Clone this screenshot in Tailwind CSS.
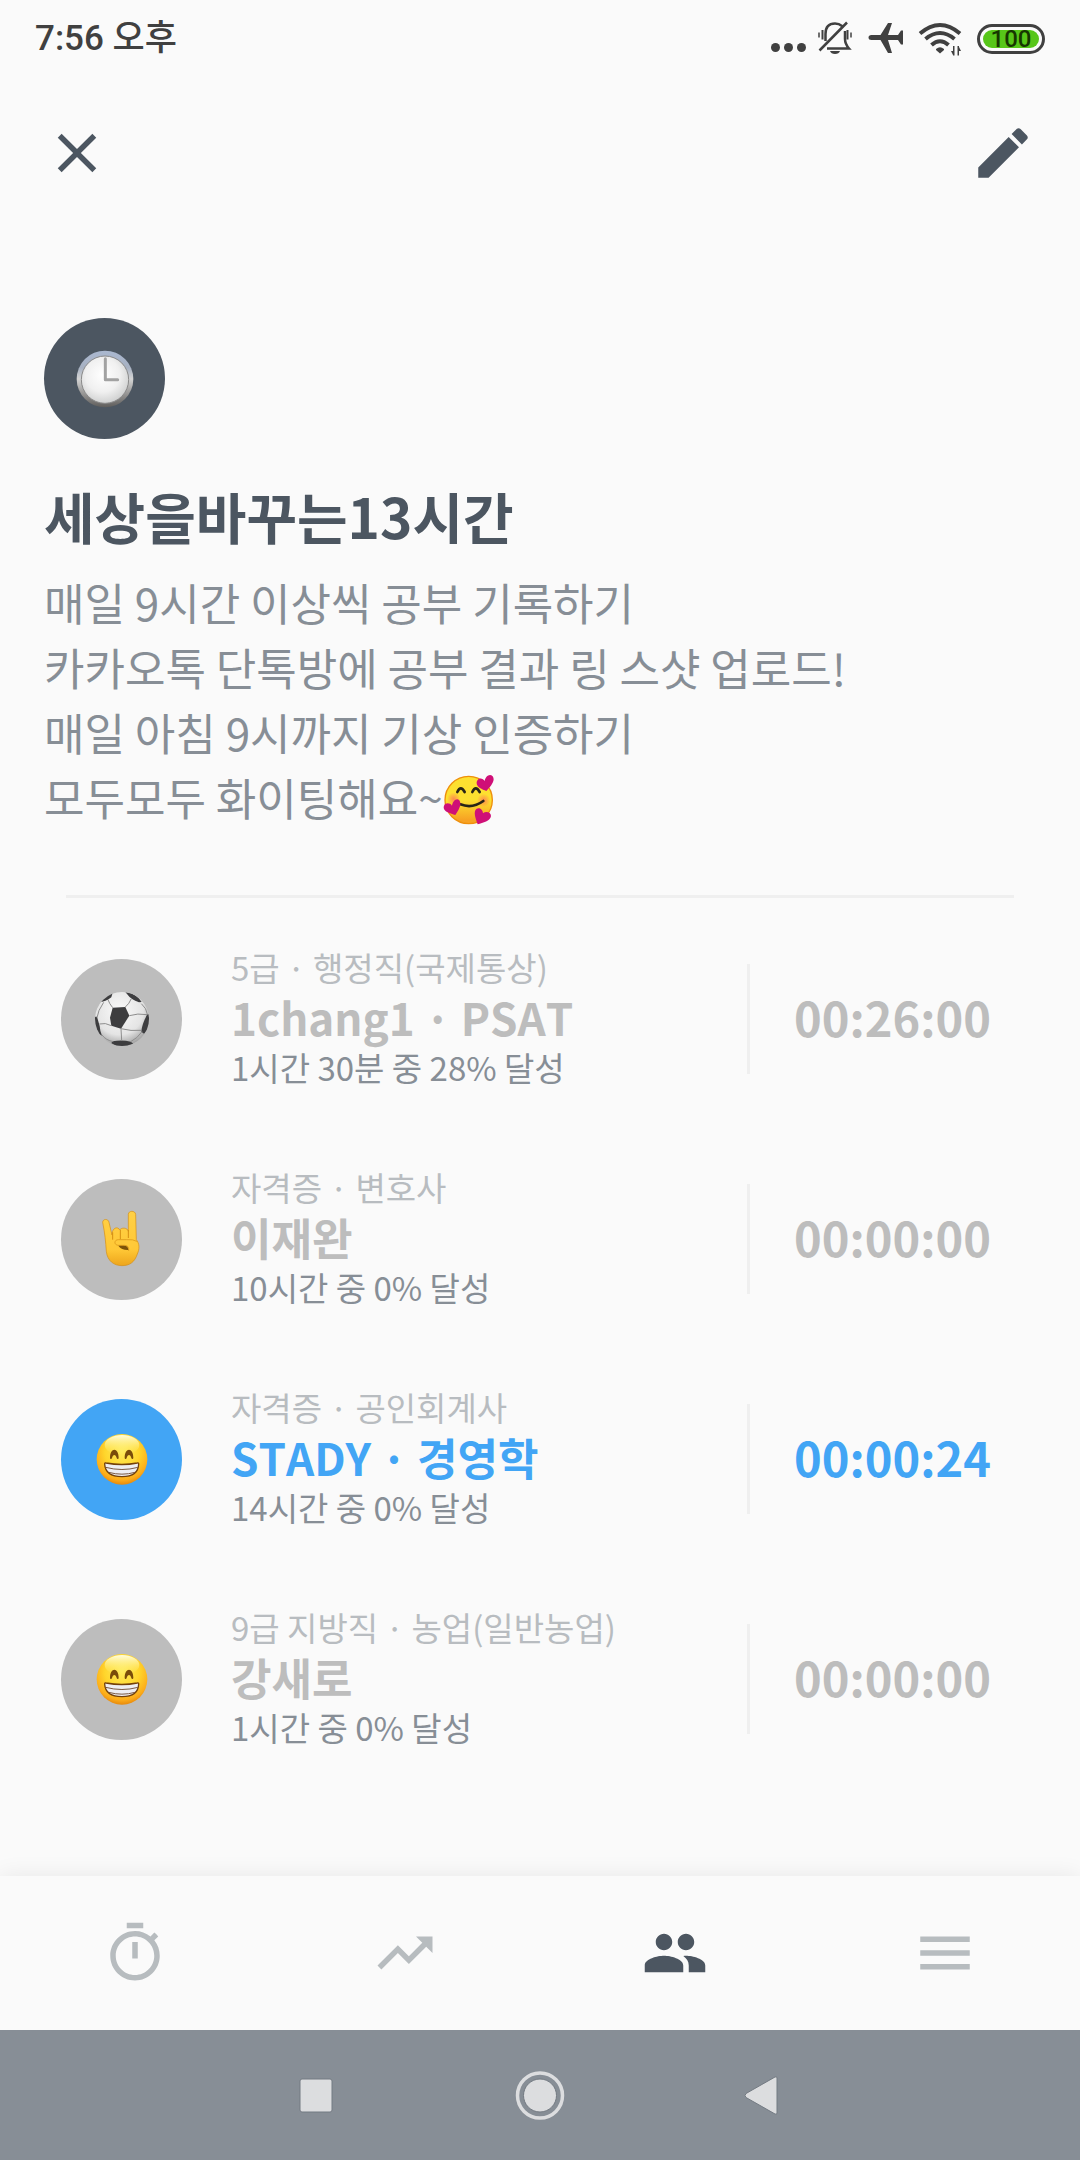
<!DOCTYPE html>
<html lang="ko">
<head>
<meta charset="utf-8">
<meta name="viewport" content="width=device-width, initial-scale=1">
<title>세상을바꾸는13시간</title>
<script src="https://cdn.jsdelivr.net/npm/@tailwindcss/browser@4"></script>
</head>
<body class="flex min-h-screen flex-col bg-[#fafafa] font-['Noto_Sans_CJK_JP','Noto_Sans_CJK_KR',sans-serif] text-[#4c5661] [font-feature-settings:'locl'_0] [font-kerning:none]">

<svg class="absolute size-0" aria-hidden="true">
  <defs>
    <radialGradient id="skin" cx="0.5" cy="0.35" r="0.68">
      <stop offset="0" stop-color="#ffec5c"/><stop offset="0.5" stop-color="#ffd62c"/><stop offset="0.82" stop-color="#fcac1a"/><stop offset="1" stop-color="#e07f08"/>
    </radialGradient>
    <linearGradient id="shine" x1="0" y1="0" x2="0" y2="1">
      <stop offset="0" stop-color="#fffde0"/><stop offset="1" stop-color="#fff06a" stop-opacity="0"/>
    </linearGradient>
    <linearGradient id="rim" x1="0" y1="0" x2="0" y2="1">
      <stop offset="0" stop-color="#aab8d0"/><stop offset="0.3" stop-color="#a7b1c2"/><stop offset="0.5" stop-color="#d4d4d4"/><stop offset="1" stop-color="#5e5c5a"/>
    </linearGradient>
    <radialGradient id="dial" cx="0.45" cy="0.4" r="0.6">
      <stop offset="0" stop-color="#ffffff"/><stop offset="0.6" stop-color="#f0f0f0"/><stop offset="1" stop-color="#d0d1d1"/>
    </radialGradient>
    <radialGradient id="leather" cx="0.45" cy="0.35" r="0.68">
      <stop offset="0" stop-color="#fafafa"/><stop offset="0.65" stop-color="#e4e4e4"/><stop offset="1" stop-color="#9a9a9a"/>
    </radialGradient>
    <linearGradient id="hand" x1="0" y1="0" x2="0" y2="1">
      <stop offset="0" stop-color="#ffd045"/><stop offset="0.7" stop-color="#ffc836"/><stop offset="1" stop-color="#eda51c"/>
    </linearGradient>
    <linearGradient id="love" x1="0" y1="0" x2="0" y2="1">
      <stop offset="0.5" stop-color="#fde030"/><stop offset="0.92" stop-color="#f7a223"/>
    </linearGradient>
    <radialGradient id="blush">
      <stop offset="0" stop-color="#ff7555" stop-opacity="0.8"/><stop offset="1" stop-color="#ff7555" stop-opacity="0"/>
    </radialGradient>
    <clipPath id="ball-edge"><circle cx="108" cy="102" r="81"/></clipPath>

    <symbol id="grin" viewBox="2 0 216 204">
      <circle cx="110" cy="103" r="76" fill="url(#skin)"/>
      <ellipse cx="110" cy="60" rx="52" ry="30" fill="url(#shine)"/>
      <g fill="#7a4d0a">
        <path d="M74 98c0-32 26-32 26 0 0 5-5 5-6 1-3-12-11-12-14 0-1 4-6 4-6-1z"/><path d="M118 98c0-32 26-32 26 0 0 5-5 5-6 1-3-12-11-12-14 0-1 4-6 4-6-1z"/>
      </g>
      <path d="M58 117q0-4 4-3 48 9 94 0 4-1 4 3-1 38-50 38-50 0-52-38z" fill="#eeeef2" stroke="#73400a" stroke-width="4"/>
      <path d="M61 127q49 13 97 0M70 142q40 11 79 0" fill="none" stroke="#7b5a44" stroke-width="3"/>
    </symbol>

    <symbol id="soccer" viewBox="0 0 216 204">
      <circle cx="108" cy="102" r="81" fill="url(#leather)"/>
      <g clip-path="url(#ball-edge)">
        <g fill="#3d3d3f">
          <path d="M80 68 118 66 130 92 105 131 76 122 72 98z"/>
          <path d="M38 48q16-20 42-25l-4 14q-16 13-38 15z"/>
          <path d="M118 21q34 4 49 30l-8 1q-24-8-36-25z"/>
          <path d="M184 88l8 0 0 40-18 18-8-6q2-24 18-52z"/>
          <path d="M25 95h8l8 28q1 16 7 29l-14-8-10-30z"/>
          <path d="M80 169q28-5 54 1l8 6-20 10H94l-18-12z"/>
        </g>
        <g fill="none" stroke="#8d8d8d" stroke-width="3">
          <path d="M80 68Q70 56 66 44M118 66q12-10 18-25M130 92q24-8 54-3M105 131l2 36M76 122q-18-10-36-5M105 131q30 8 60 5M33 98q2-20 20-46M166 56q16 14 18 32M48 150q12 16 34 20M134 170q20-10 34-30"/>
        </g>
      </g>
    </symbol>

    <symbol id="rock" viewBox="107 136 216 204">
      <path d="M157 188c0-11 17-12 19 0l9 38c0-24 19-26 23-15 4-8 24-8 26 4v-51c0-12 21-12 22 0l2 76c10 12 10 28 3 43-8 24-22 35-46 35s-44-14-47-43c-2-28-4-52-11-87z" fill="url(#hand)" stroke="#d58e12" stroke-width="2"/>
      <path d="M187 218v22M210 211v28M234 211v24" fill="none" stroke="#d58e12" stroke-width="3"/>
      <path d="M262 246q-14-8-34-6h-24c-13 0-14 16 0 17h19q14 0 12 17" fill="#ffca3a" stroke="#d58e12" stroke-width="2"/>
      <path d="M204 258q10 14 30 13 0-13-13-13z" fill="#7d5208"/>
    </symbol>

    <symbol id="clock" viewBox="115 133 216 204">
      <circle cx="223" cy="235" r="85" fill="url(#rim)"/>
      <circle cx="223" cy="237" r="71" fill="url(#dial)" stroke="#8a8a8a" stroke-width="3"/>
      <path d="M224 174v63h37" fill="none" stroke="#a2a2a2" stroke-width="9" stroke-linecap="round" stroke-linejoin="round"/>
    </symbol>

    <symbol id="smile-hearts" viewBox="30 45 156 156">
      <circle cx="107" cy="123" r="71" fill="url(#love)" stroke="#ee8f0b" stroke-width="4"/>
      <circle cx="62" cy="120" r="20" fill="url(#blush)"/><circle cx="152" cy="124" r="20" fill="url(#blush)"/>
      <g fill="none" stroke="#292517" stroke-width="8" stroke-linecap="round">
        <path d="M73 99q10-22 22 0M118 99q10-22 22 0M82 136q36 14 69-10"/>
      </g>
      <g fill="#cf0f77">
        <path d="M160 96c-14-6-34-13-28-30 5-11 18-9 23 0 2-12 14-24 24-14 10 14-8 32-19 44z"/>
        <path d="M67 168c-16-6-40-10-34-28 5-10 18-9 24 0 2-14 14-25 22-16 9 13-3 30-12 44z"/>
        <path d="M134 196c-6-16-14-38-4-46 11-7 20 4 20 13 8-7 24-4 24 8-2 16-24 20-40 25z"/>
      </g>
    </symbol>
  </defs>
</svg>

<div class="flex h-[78px] items-center justify-between pr-[35px] pl-[35px] text-[#404040]">
  <span class="font-['Roboto','Noto_Sans_CJK_KR',sans-serif] text-[35px] leading-[78px] font-medium">7:56 오후</span>
  <div class="flex items-center">
    <svg class="h-[38px] w-[209px]" viewBox="768 20 209 38" fill="currentColor" role="img" aria-label="알림, 무음, 비행기 모드, Wi-Fi">
      <circle cx="775.5" cy="47.500" r="4.500"/><circle cx="788.500" cy="47.500" r="4.500"/><circle cx="801.500" cy="47.500" r="4.500"/>
      <g fill="none" stroke="currentColor" stroke-width="2.500">
        <path d="M825.500 41V34q0-10.500 9.500-10.500 4 0 7 2.500M845 31v8q0 5 4 9.500H827M819.500 50.500l27.500-28"/>
        <path d="M822.500 30v9.500M847.500 30v9.500" stroke-width="2"/><path d="M819 32.500v5M851 32.500v5" stroke-width="1.500"/>
      </g>
      <path d="M830 51h10q-1 3-5 3t-5-3z"/>
      <path d="M868.500 37.500q0-2.500 3-2.500h9l7.500-12h4l-4 12h10l3-4.500h2v14h-2l-3-4.500h-10l4 13h-4l-7.500-13h-9q-3 0-3-2.500z"/>
      <g fill="none" stroke="currentColor" stroke-width="4">
        <path d="M920 33.500Q940 16.500 960 33.500M925.500 39Q940 27 954.500 39M931.500 45Q940 37.500 948.500 45"/>
      </g>
      <path d="M936 49q4-3.500 8 0v1l-4 3.500-4-3.500z"/>
      <path d="M953 46v9.500h1.500V46zM951 51h2v4zM957.500 46v9.500h1.500V46zM959 47l2 4h-2z"/>
    </svg>
    <div class="flex h-[30px] w-[68px] rounded-full border-3 border-[#404040] p-[3px]">
      <span class="flex w-full items-center justify-center rounded-full bg-[#57c619] font-['Roboto',sans-serif] text-[24px] leading-none font-medium text-[#163600]">100</span>
    </div>
  </div>
</div>

<header class="flex h-[150px] items-center justify-between px-[44px]">
  <button type="button" aria-label="닫기"><svg class="size-[66px]" viewBox="0 0 24 24" fill="currentColor"><path d="M19 6.410 17.590 5 12 10.590 6.410 5 5 6.410 10.590 12 5 17.590 6.410 19 12 13.410 17.590 19 19 17.590 13.410 12z"/></svg></button>
  <button type="button" aria-label="편집"><svg class="size-[66px]" viewBox="0 0 24 24" fill="currentColor"><path d="M3 17.250V21h3.750L17.810 9.940l-3.750-3.750L3 17.250zM20.710 7.040c.39-.39.39-1.020 0-1.410l-2.340-2.340c-.39-.39-1.020-.39-1.410 0l-1.830 1.830 3.750 3.750 1.830-1.830z"/></svg></button>
</header>

<main class="flex-1">
  <section class="px-[44px] pt-[90px]">
    <div class="flex size-[121px] items-center justify-center rounded-full bg-[#4c5661]">
      <svg class="h-[68px] w-[72px]" role="img" aria-label="시계"><use href="#clock"/></svg>
    </div>
    <h1 class="mt-[36px] text-[55px] leading-[80px] font-bold">세상을바꾸는13시간</h1>
    <p class="mt-[15px] text-[44px] leading-[65px] text-[#878e96]">매일 9시간 이상씩 공부 기록하기<br>카카오톡 단톡방에 공부 결과 링 스샷 업로드!<br>매일 아침 9시까지 기상 인증하기<br>모두모두 화이팅해요~<svg class="mb-[8px] inline-block size-[52px] align-middle" role="img" aria-label="하트 웃는 얼굴"><use href="#smile-hearts"/></svg></p>
  </section>

  <hr class="mx-[66px] mt-[61px] border-t-3 border-[#efefef]">

  <ul class="mt-[11px]">
    <li class="flex h-[220px] items-center pl-[61px]">
      <div class="flex size-[121px] shrink-0 items-center justify-center rounded-full bg-[#bdbdbd]"><svg class="h-[68px] w-[72px]" role="img" aria-label="축구공"><use href="#soccer"/></svg></div>
      <div class="ml-[49px] flex-1 pb-[4px] text-[33px] leading-[50px] text-[#878e96]">
        <p class="text-[#b8bcc0]">5급 · 행정직(국제통상)</p>
        <h2 class="text-[44px] leading-[50px] font-bold text-[#bdbdbd]">1chang1 · PSAT</h2>
        <p>1시간 30분 중 28% 달성</p>
      </div>
      <div class="flex h-[110px] w-[333px] items-center border-l-3 border-[#efefef] pb-[4px] pl-[44px] text-[47px] font-bold text-[#bdbdbd]"><time>00:26:00</time></div>
    </li>
    <li class="flex h-[220px] items-center pl-[61px]">
      <div class="flex size-[121px] shrink-0 items-center justify-center rounded-full bg-[#bdbdbd]"><svg class="h-[68px] w-[72px]" role="img" aria-label="손"><use href="#rock"/></svg></div>
      <div class="ml-[49px] flex-1 pb-[4px] text-[33px] leading-[50px] text-[#878e96]">
        <p class="text-[#b8bcc0]">자격증 · 변호사</p>
        <h2 class="text-[44px] leading-[50px] font-bold text-[#bdbdbd]">이재완</h2>
        <p>10시간 중 0% 달성</p>
      </div>
      <div class="flex h-[110px] w-[333px] items-center border-l-3 border-[#efefef] pb-[4px] pl-[44px] text-[47px] font-bold text-[#bdbdbd]"><time>00:00:00</time></div>
    </li>
    <li class="flex h-[220px] items-center pl-[61px]">
      <div class="flex size-[121px] shrink-0 items-center justify-center rounded-full bg-[#42a5f5]"><svg class="h-[68px] w-[72px]" role="img" aria-label="웃는 얼굴"><use href="#grin"/></svg></div>
      <div class="ml-[49px] flex-1 pb-[4px] text-[33px] leading-[50px] text-[#878e96]">
        <p class="text-[#b8bcc0]">자격증 · 공인회계사</p>
        <h2 class="text-[44px] leading-[50px] font-bold text-[#42a5f5]">STADY · 경영학</h2>
        <p>14시간 중 0% 달성</p>
      </div>
      <div class="flex h-[110px] w-[333px] items-center border-l-3 border-[#efefef] pb-[4px] pl-[44px] text-[47px] font-bold text-[#42a5f5]"><time>00:00:24</time></div>
    </li>
    <li class="flex h-[220px] items-center pl-[61px]">
      <div class="flex size-[121px] shrink-0 items-center justify-center rounded-full bg-[#bdbdbd]"><svg class="h-[68px] w-[72px]" role="img" aria-label="웃는 얼굴"><use href="#grin"/></svg></div>
      <div class="ml-[49px] flex-1 pb-[4px] text-[33px] leading-[50px] text-[#878e96]">
        <p class="text-[#b8bcc0]">9급 지방직 · 농업(일반농업)</p>
        <h2 class="text-[44px] leading-[50px] font-bold text-[#bdbdbd]">강새로</h2>
        <p>1시간 중 0% 달성</p>
      </div>
      <div class="flex h-[110px] w-[333px] items-center border-l-3 border-[#efefef] pb-[4px] pl-[44px] text-[47px] font-bold text-[#bdbdbd]"><time>00:00:00</time></div>
    </li>
  </ul>
</main>

<nav class="grid h-[154px] grid-cols-4 place-items-center bg-[#fafafa] text-[#b7bcbf] shadow-[0_0_22px_rgba(0,0,0,0.08)]">
  <a href="#timer" aria-label="타이머"><svg class="size-[66px]" viewBox="0 0 24 24" fill="currentColor"><path d="M15 1H9v2h6V1zm-4 13h2V8h-2v6zm8.030-6.610 1.420-1.420c-.43-.51-.9-.99-1.410-1.410l-1.420 1.420C16.070 4.740 14.120 4 12 4c-4.970 0-9 4.030-9 9s4.020 9 9 9 9-4.030 9-9c0-2.120-.74-4.070-1.970-5.610zM12 20c-3.870 0-7-3.130-7-7s3.130-7 7-7 7 3.130 7 7-3.130 7-7 7z"/></svg></a>
  <a href="#stats" aria-label="통계"><svg class="size-[66px]" viewBox="0 0 24 24" fill="currentColor"><path d="m16 6 2.290 2.290-4.880 4.880-4-4L2 16.590 3.410 18l6-6 4 4 6.300-6.290L22 12V6z"/></svg></a>
  <a href="#group" aria-label="그룹" aria-current="page" class="text-[#4c5661]"><svg class="size-[66px]" viewBox="0 0 24 24" fill="currentColor"><path d="M16 11c1.660 0 2.990-1.340 2.990-3S17.660 5 16 5s-3 1.340-3 3 1.340 3 3 3zm-8 0c1.660 0 2.990-1.340 2.990-3S9.660 5 8 5 5 6.340 5 8s1.340 3 3 3zm0 2c-2.330 0-7 1.170-7 3.500V19h14v-2.500c0-2.330-4.670-3.500-7-3.500zm8 0c-.29 0-.62.020-.97.050 1.160.84 1.970 1.970 1.970 3.450V19h6v-2.500c0-2.330-4.670-3.500-7-3.500z"/></svg></a>
  <a href="#menu" aria-label="메뉴"><svg class="size-[66px]" viewBox="0 0 24 24" fill="currentColor"><path d="M3 18h18v-2H3v2zm0-5h18v-2H3v2zm0-7v2h18V6H3z"/></svg></a>
</nav>

<div class="flex h-[130px] items-center justify-center gap-[156px] bg-[#878e96] text-[#dcdddf]">
  <button type="button" aria-label="최근 앱"><svg class="size-[68px]" viewBox="0 0 68 68"><rect x="18" y="18" width="32" height="33" rx="2" fill="currentColor" stroke="#737a82"/></svg></button>
  <button type="button" aria-label="홈"><svg class="size-[68px]" viewBox="0 0 68 68"><circle cx="34" cy="34.500" r="22.500" fill="none" stroke="currentColor" stroke-width="3.500"/><circle cx="34" cy="34.500" r="16.500" fill="currentColor" stroke="#737a82"/></svg></button>
  <button type="button" aria-label="뒤로"><svg class="size-[68px]" viewBox="0 0 68 68"><path d="M45 16q2-1 2 1v35q0 2-2 1L16 36.500q-2-2 0-4z" fill="currentColor" stroke="#737a82"/></svg></button>
</div>
</body>
</html>
